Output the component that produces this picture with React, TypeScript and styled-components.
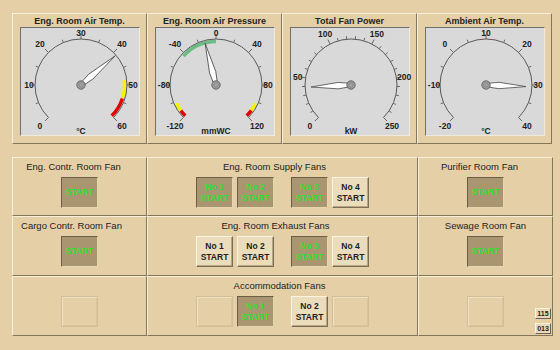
import React, { FC } from 'react'
import styled, { createGlobalStyle } from 'styled-components'

const GlobalStyle = createGlobalStyle`
  html, body {
    margin: 0;
    padding: 0;
    background: #e4cfa6;
  }
  body {
    font-family: "Liberation Sans", Arial, sans-serif;
    color: #1e1e1e;
  }
`

// gauge face geometry
const FACE_W = 120
const FACE_H = 109
const CX = 61
const CY = 58
const R = 46

type Band = { from: number; to: number; color: string }

type GaugeProps = {
  title: string
  min: number
  max: number
  major: number
  minor: number
  value: number
  unit: string
  needle: number
  bands?: Band[]
}

const rad = (deg: number) => (deg * Math.PI) / 180

const Gauge: FC<GaugeProps> = ({ title, min, max, major, minor, value, unit, needle, bands = [] }) => {
  const angle = (v: number) => 135 + ((v - min) / (max - min)) * 270
  const pt = (deg: number, r: number) => [CX + r * Math.cos(rad(deg)), CY + r * Math.sin(rad(deg))]

  const arc = (a1: number, a2: number, r: number) => {
    const [x1, y1] = pt(a1, r)
    const [x2, y2] = pt(a2, r)
    const large = a2 - a1 > 180 ? 1 : 0
    return `M${x1} ${y1} A${r} ${r} 0 ${large} 1 ${x2} ${y2}`
  }

  const ticks: { v: number; big: boolean }[] = []
  for (let v = min; v <= max + 0.001; v += minor) {
    ticks.push({ v, big: Math.abs((v - min) % major) < 0.001 })
  }
  const labels: number[] = []
  for (let v = min; v <= max + 0.001; v += major) labels.push(v)

  return (
    <GaugePanel>
      <GaugeTitle>{title}</GaugeTitle>
      <Face>
        <svg width={FACE_W} height={FACE_H} viewBox={`0 0 ${FACE_W} ${FACE_H}`}>
          {bands.map((b, i) => (
            <path key={i} d={arc(angle(b.from), angle(b.to), R - 2.5)} stroke={b.color} strokeWidth={3.4} fill="none" />
          ))}
          <path d={arc(135, 405, R)} stroke="#5a5a5a" strokeWidth={1} fill="none" />
          {ticks.map(t => {
            const a = angle(t.v)
            const [x1, y1] = pt(a, R)
            const [x2, y2] = pt(a, R + (t.big ? 5 : 3))
            return <line key={t.v} x1={x1} y1={y1} x2={x2} y2={y2} stroke="#5a5a5a" strokeWidth={0.9} />
          })}
          {labels.map(v => {
            const a = angle(v)
            const [x, y] = pt(a, 52 + 6 * Math.abs(Math.sin(rad(2 * a))))
            return (
              <ScaleText key={v} x={x} y={y} textAnchor="middle" dominantBaseline="central">
                {v}
              </ScaleText>
            )
          })}
          <ScaleText x={CX} y={104} textAnchor="middle" dominantBaseline="central">
            {unit}
          </ScaleText>
          <g transform={`rotate(${angle(value)} ${CX} ${CY})`}>
            <polygon
              points={`${CX + 3},${CY - 2} ${CX + 13},${CY - 3.2} ${CX + needle},${CY} ${CX + 13},${CY + 3.2} ${CX + 3},${CY + 2}`}
              fill="#ffffff"
              stroke="#4a4a4a"
              strokeWidth={0.8}
            />
          </g>
          <circle cx={CX} cy={CY} r={4.2} fill="#a2a2a2" stroke="#4f4f4f" strokeWidth={0.8} />
          <circle cx={CX} cy={CY} r={2.3} fill="none" stroke="#777" strokeWidth={0.6} />
        </svg>
      </Face>
    </GaugePanel>
  )
}

type FanProps = { on?: boolean; no?: number }

const Fan: FC<FanProps> = ({ on = false, no }) => (
  <FanButton $on={on}>
    {no !== undefined && <span>No {no}</span>}
    <span>START</span>
  </FanButton>
)

const App: FC = () => {
  return (
    <Screen>
      <GlobalStyle />
      <GaugeRow>
        <Gauge
          title="Eng. Room Air Temp."
          min={0}
          max={60}
          major={10}
          minor={5}
          value={41}
          unit="°C"
          needle={45}
          bands={[
            { from: 48.5, to: 54, color: '#f4f400' },
            { from: 54, to: 60, color: '#e20000' },
          ]}
        />
        <Gauge
          title="Eng. Room Air Pressure"
          min={-120}
          max={120}
          major={40}
          minor={20}
          value={-13}
          unit="mmWC"
          needle={43}
          bands={[
            { from: -43, to: 0, color: '#6bbd84' },
            { from: -120, to: -112, color: '#e20000' },
            { from: -112, to: -102, color: '#f4f400' },
            { from: 102, to: 112, color: '#f4f400' },
            { from: 112, to: 120, color: '#e20000' },
          ]}
        />
        <Gauge title="Total Fan Power" min={0} max={250} major={50} minor={10} value={39} unit="kW" needle={40} />
        <Gauge title="Ambient Air Temp." min={-20} max={40} major={10} minor={5} value={30.5} unit="°C" needle={40} />
      </GaugeRow>

      <FanGrid>
        <Cell>
          <CellTitle $shift={-6}>Eng. Contr. Room Fan</CellTitle>
          <Slots>
            <Fan on />
          </Slots>
        </Cell>
        <Cell>
          <CellTitle $shift={-8}>Eng. Room Supply Fans</CellTitle>
          <Slots>
            <Pair>
              <Fan on no={1} />
              <Fan on no={2} />
            </Pair>
            <Pair>
              <Fan on no={3} />
              <Fan no={4} />
            </Pair>
          </Slots>
        </Cell>
        <Cell>
          <CellTitle $shift={-6}>Purifier Room Fan</CellTitle>
          <Slots>
            <Fan on />
          </Slots>
        </Cell>

        <Cell>
          <CellTitle $shift={-8}>Cargo Contr. Room Fan</CellTitle>
          <Slots>
            <Fan on />
          </Slots>
        </Cell>
        <Cell>
          <CellTitle $shift={-7}>Eng. Room Exhaust Fans</CellTitle>
          <Slots>
            <Pair>
              <Fan no={1} />
              <Fan no={2} />
            </Pair>
            <Pair>
              <Fan on no={3} />
              <Fan no={4} />
            </Pair>
          </Slots>
        </Cell>
        <Cell>
          <CellTitle $shift={0}>Sewage Room Fan</CellTitle>
          <Slots>
            <Fan on />
          </Slots>
        </Cell>

        <Cell>
          <CellTitle $shift={0}>&nbsp;</CellTitle>
          <Slots>
            <EmptySlot />
          </Slots>
        </Cell>
        <Cell>
          <CellTitle $shift={-3}>Accommodation Fans</CellTitle>
          <Slots>
            <Pair>
              <EmptySlot />
              <Fan on no={1} />
            </Pair>
            <Pair>
              <Fan no={2} />
              <EmptySlot />
            </Pair>
          </Slots>
        </Cell>
        <Cell>
          <CellTitle $shift={0}>&nbsp;</CellTitle>
          <Slots>
            <EmptySlot />
          </Slots>
          <PageTags>
            <PageTag>115</PageTag>
            <PageTag>013</PageTag>
          </PageTags>
        </Cell>
      </FanGrid>
    </Screen>
  )
}

const Screen = styled.div`
    padding: 13px 0 0 12px;
    width: 560px;
    height: 350px;
    box-sizing: border-box;
`
const GaugeRow = styled.div`
    display: flex;
`
const GaugePanel = styled.div`
    width: 135px;
    height: 131px;
    box-sizing: border-box;
    border: 1px solid;
    border-color: #f8efdb #867659 #867659 #f8efdb;
    padding-top: 2px;
    display: flex;
    flex-direction: column;
    align-items: center;
`
const GaugeTitle = styled.div`
    font-size: 9px;
    font-weight: 700;
    line-height: 11px;
    color: #222;
    white-space: nowrap;
`
const Face = styled.div`
    width: ${FACE_W}px;
    height: ${FACE_H}px;
    background: #d9d9d9;
    box-sizing: border-box;
    border: 1px solid;
    border-color: #6f6f6f #f2ead8 #f2ead8 #6f6f6f;
    svg {
        display: block;
        overflow: visible;
        margin: -1px 0 0 -1px;
    }
`
const ScaleText = styled.text`
    font-family: "Liberation Sans", Arial, sans-serif;
    font-size: 8.5px;
    font-weight: 700;
    fill: #222;
`
const FanGrid = styled.div`
    margin-top: 13px;
    display: grid;
    grid-template-columns: 135px 271px 135px;
    grid-template-rows: 59px 60px 60px;
`
const Cell = styled.div`
    position: relative;
    box-sizing: border-box;
    border: 1px solid;
    border-color: #f8efdb #867659 #867659 #f8efdb;
    padding-top: 3px;
    display: flex;
    flex-direction: column;
    align-items: center;
`
const CellTitle = styled.div<{ $shift: number }>`
    font-size: 9.5px;
    line-height: 11px;
    color: #222;
    white-space: nowrap;
    transform: translateX(${p => p.$shift}px);
`
const Slots = styled.div`
    margin-top: 5px;
    display: flex;
    gap: 17px;
`
const Pair = styled.div`
    display: flex;
    gap: 4px;
`
const FanButton = styled.div<{ $on: boolean }>`
    width: 37px;
    height: 31px;
    box-sizing: border-box;
    display: flex;
    flex-direction: column;
    align-items: center;
    justify-content: center;
    font-size: 8.5px;
    font-weight: 700;
    line-height: 11px;
    border: 1px solid;
    background: ${p => (p.$on ? '#a9956f' : '#ebdcbb')};
    color: ${p => (p.$on ? '#2fe02f' : '#1e1e1e')};
    border-color: ${p => (p.$on ? '#6c5e46 #e6d5b1 #e6d5b1 #6c5e46' : '#fbf4e3 #7c6d55 #7c6d55 #fbf4e3')};
    box-shadow: ${p => (p.$on ? 'none' : 'inset -1px -1px 0 #b8a582')};
`
const EmptySlot = styled.div`
    width: 37px;
    height: 31px;
    box-sizing: border-box;
    border: 1px solid #d2bf98;
    box-shadow: inset 1px 1px 0 #efe2c4, inset -1px -1px 0 #d8c59f;
`
const PageTags = styled.div`
    position: absolute;
    right: 1px;
    bottom: 1px;
    display: flex;
    flex-direction: column;
    gap: 4px;
`
const PageTag = styled.div`
    width: 16px;
    height: 11px;
    box-sizing: border-box;
    border: 1px solid;
    border-color: #fbf4e3 #6f624c #6f624c #fbf4e3;
    background: #e9d9b6;
    font-size: 7px;
    font-weight: 700;
    line-height: 9px;
    text-align: center;
    color: #1e1e1e;
`

export default App
